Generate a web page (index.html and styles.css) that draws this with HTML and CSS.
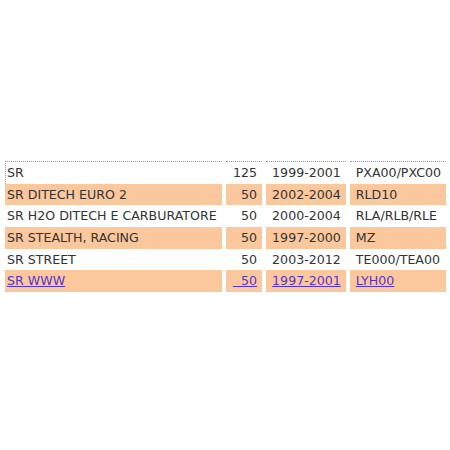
FILE: index.html
```html
<!DOCTYPE html>
<html>
<head>
<meta charset="utf-8">
<link rel="stylesheet" href="styles.css">
</head>
<body>
<div class="page">
<table class="models">
<tr class="first">
<td class="name">SR</td><td class="cc">125</td><td class="years">1999-2001</td><td class="code">PXA00/PXC00</td>
</tr>
<tr class="alt">
<td class="name">SR DITECH EURO 2</td><td class="cc">50</td><td class="years">2002-2004</td><td class="code">RLD10</td>
</tr>
<tr>
<td class="name">SR H2O DITECH E CARBURATORE</td><td class="cc">50</td><td class="years">2000-2004</td><td class="code">RLA/RLB/RLE</td>
</tr>
<tr class="alt">
<td class="name">SR STEALTH, RACING</td><td class="cc">50</td><td class="years">1997-2000</td><td class="code">MZ</td>
</tr>
<tr>
<td class="name">SR STREET</td><td class="cc">50</td><td class="years">2003-2012</td><td class="code">TE000/TEA00</td>
</tr>
<tr class="alt">
<td class="name"><a href="#">SR WWW</a></td><td class="cc"><a href="#">&nbsp;&nbsp;50</a></td><td class="years"><a href="#">1997-2001</a></td><td class="code"><a href="#">LYH00</a></td>
</tr>
</table>
</div>
</body>
</html>
```

FILE: styles.css
```css
html, body {
  margin: 0;
  padding: 0;
  background: #ffffff;
}
.page {
  padding: 161px 0 0 1px;
}
.models {
  table-layout: fixed;
  border-collapse: separate;
  border-spacing: 4px 0;
  font-family: "DejaVu Sans", Verdana, sans-serif;
  font-size: 12.6px;
  color: #333333;
}
.models td {
  box-sizing: border-box;
  padding: 3px 5px 3px 6px;
  line-height: 15.67px;
  white-space: nowrap;
}
.models .name {
  width: 213px;
  padding-left: 2px;
}
.models .cc {
  width: 40px;
  text-align: right;
}
.models .years {
  width: 78px;
}
.models .code {
  width: 94px;
}
.models .first td {
  border-top: 1px dotted #9a9a9a;
}
.models .first .name {
  border-left: 1px dotted #9a9a9a;
  padding-left: 1px;
}
.models .alt td {
  background: #fbc89d;
}
.models a {
  color: #5535c9;
  text-decoration: underline;
}
```
